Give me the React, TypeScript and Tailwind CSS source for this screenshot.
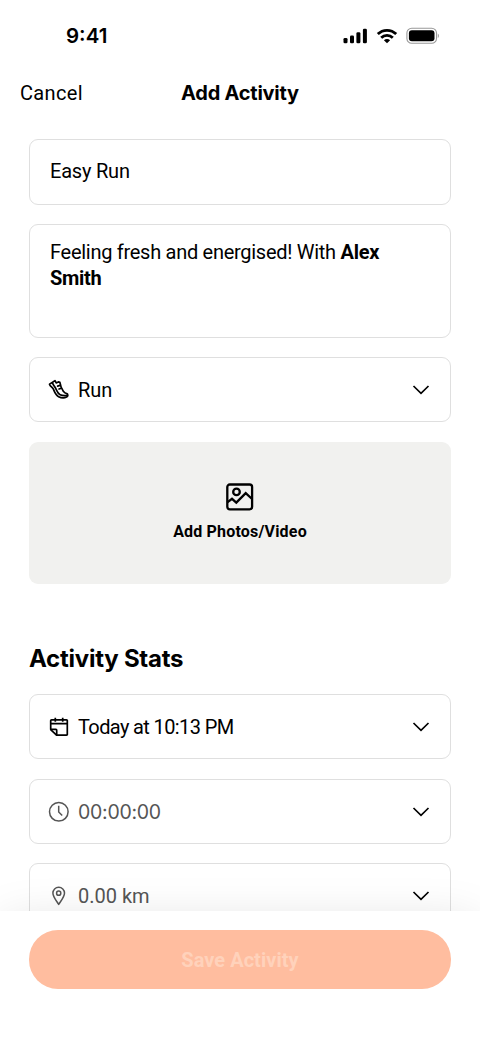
import React from "react";

const card = "rounded-[9px] border border-[#dfdfdf] bg-white";

function Chevron() {
  return (
    <svg width="18" height="18" viewBox="0 0 18 18" fill="none" stroke="#000" strokeWidth="1.7" className="shrink-0">
      <path d="M1.5 5 9 12.300l7.500-7.300" />
    </svg>
  );
}

function ShoeIcon() {
  return (
    <svg width="22" height="22" viewBox="0 0 22 22" fill="none" stroke="#000" strokeWidth="1.7" strokeLinejoin="round" strokeLinecap="round">
      <path d="M1.5 5.200 7 1.600l1.200 2.300 2.100-1 1.600.5c.4 3 1.500 6 3.400 8.900.9 1.400 2.400 2.200 4.100 2.500.7 1.400.4 2.600-.9 3.300-2 1-5.300.9-7.900-.4-3-1.500-3.900-4.500-5.200-7.500C4.600 8.400 2.300 7.700 1.500 5.200Z" />
      <path d="M4.600 4c.4 2 2 3.100 3 5.200 1.300 2.600 2 5.400 4.500 6.500 2 .9 4.200 1.100 7 .7" />
      <path d="M9.600 7.100l2.500-.7M11 10l2.400-.8" />
    </svg>
  );
}

function CalendarIcon() {
  return (
    <svg width="22" height="22" viewBox="0 0 22 22" fill="none" stroke="#000" strokeWidth="1.700" strokeLinejoin="round">
      <path d="M3.500 3.800h15a.8.800 0 0 1 .8.800v13.800a.8.800 0 0 1-.8.800H8.500L2.700 13.600V4.600a.8.800 0 0 1 .8-.8Z" />
      <path d="M2.700 7.700h16.600M7.300 1.800v4M14.700 1.800v4M2.700 13.400H7.900a.8.800 0 0 1 .8.800v5" />
    </svg>
  );
}

function ClockIcon() {
  return (
    <svg width="22" height="22" viewBox="0 0 22 22" fill="none" stroke="#555" strokeWidth="1.5">
      <circle cx="10.800" cy="10.800" r="9.300" />
      <path d="M10.700 4.800v6.200l3.500 3.500" />
    </svg>
  );
}

function PinIcon() {
  return (
    <svg width="22" height="22" viewBox="0 0 22 22" fill="none" stroke="#555" strokeWidth="1.5" strokeLinejoin="round">
      <path d="M10.700 19.400C8.700 16 4.900 12.200 4.900 8.100a5.800 5.800 0 0 1 11.600 0c0 4.100-3.800 7.900-5.800 11.300Z" />
      <circle cx="10.700" cy="8.200" r="2.100" />
    </svg>
  );
}

function PhotoIcon() {
  return (
    <svg width="28" height="28" viewBox="0 0 28 28" fill="none" stroke="#000" strokeWidth="2.300">
      <rect x="1.300" y="1.500" width="24.800" height="24.800" rx="2.500" />
      <circle cx="10.500" cy="8.900" r="3.300" />
      <path d="M1.300 19.300 6 15.800l4.300 3.800L19.700 10.200l6.400 5.800" />
    </svg>
  );
}

function StatusBar() {
  return (
    <div className="flex h-[70px] items-center justify-between pl-[66px] pr-[40px] pt-[2px]">
      <div className="font-[Inter,sans-serif] text-[20.500px] font-semibold">9:41</div>
      <div className="flex items-center">
        <svg width="25" height="16" viewBox="0 0 25 16">
          <rect x="0.500" y="10" width="4" height="5.200" rx="1.300" />
          <rect x="7" y="7.400" width="4" height="7.800" rx="1.300" />
          <rect x="13.400" y="4.200" width="4" height="11" rx="1.300" />
          <rect x="19.900" y="0.800" width="4" height="14.400" rx="1.300" />
        </svg>
        <svg width="22" height="16" viewBox="0 0 22 16" fill="none" stroke="#000" strokeWidth="2.800" className="ml-[8px]">
          <path d="M1.800 6.100c5.100-5.100 13.300-5.100 18.400 0" />
          <path d="M5.200 9.700c3.200-3.200 8.400-3.200 11.600 0" />
          <path d="M11 15.300 7.900 12.200c1.800-1.600 4.400-1.600 6.200 0Z" fill="#000" stroke="none" />
        </svg>
        <svg width="34" height="18" viewBox="0 0 34 18" className="ml-[8px]">
          <rect x="0.900" y="1.300" width="29.600" height="15" rx="4.800" fill="none" stroke="#999" strokeWidth="1.100" />
          <rect x="2.900" y="3.300" width="25.600" height="11" rx="3" />
          <path d="M31.800 6.500v4.600c1.500-.7 1.500-3.900 0-4.600Z" fill="#999" />
        </svg>
      </div>
    </div>
  );
}

function Row({ icon, children, tone, gap }: { icon: React.ReactNode; children: React.ReactNode; tone: string; gap: string }) {
  return (
    <div className={`${card} ${gap} flex h-[65px] shrink-0 items-center pl-[18px] pr-[20px]`}>
      {icon}
      <span className={`ml-[8px] flex-1 whitespace-nowrap ${tone}`}>{children}</span>
      <Chevron />
    </div>
  );
}

export default function App() {
  return (
    <div className="flex h-[1040px] w-[480px] flex-col overflow-hidden bg-white font-[Roboto,sans-serif] text-[20px] leading-[26px] text-black">
      <StatusBar />
      <header className="grid h-[46px] shrink-0 grid-cols-3 items-center px-[19px]">
        <span className="pl-px tracking-[0.350px]">Cancel</span>
        <h1 className="whitespace-nowrap text-center font-[Inter,sans-serif] text-[20px] font-bold tracking-[-0.240px]">Add Activity</h1>
      </header>
      <main className="flex h-[795px] shrink-0 flex-col overflow-hidden px-[29px] pt-[23px]">
        <div className={`${card} flex h-[66px] shrink-0 items-center pb-[2px] pl-[20px] tracking-[-0.200px]`}>Easy Run</div>
        <div className={`${card} mt-[19px] h-[114px] shrink-0 pl-[20px] pr-[50px] pt-[14px] tracking-[-0.280px]`}>
          Feeling fresh and energised! With <b className="font-bold">Alex Smith</b>
        </div>
        <Row icon={<ShoeIcon />} tone="tracking-[0px]" gap="mt-[19px]">Run</Row>
        <button className="mt-[20px] flex h-[142px] shrink-0 flex-col items-center rounded-[9px] bg-[#f1f1ef] pt-[41px]">
          <PhotoIcon />
          <span className="mt-[8px] text-[16px] font-bold tracking-[0.180px]">Add Photos/Video</span>
        </button>
        <h2 className="mt-[60px] h-[30px] shrink-0 font-[Inter,sans-serif] text-[24px] font-bold leading-[30px] tracking-[-0.250px]">Activity Stats</h2>
        <Row icon={<CalendarIcon />} tone="tracking-[-0.620px]" gap="mt-[20px]">Today at 10:13 PM</Row>
        <Row icon={<ClockIcon />} tone="font-[Inter,sans-serif] text-[19.500px] text-[#555] tracking-[-0.280px]" gap="mt-[20px]">00:00:00</Row>
        <Row icon={<PinIcon />} tone="text-[#555]" gap="mt-[19px]">0.00 km</Row>
      </main>
      <footer className="relative flex-1 bg-white px-[29px] pt-[19px] shadow-[0_10px_50px_-4px_rgba(0,0,0,0.150)]">
        <button className="flex h-[59px] w-full items-center justify-center rounded-[29px] bg-[#ffbd9f] font-bold tracking-[0.050px] text-[#ffd2bb]">Save Activity</button>
      </footer>
    </div>
  );
}
